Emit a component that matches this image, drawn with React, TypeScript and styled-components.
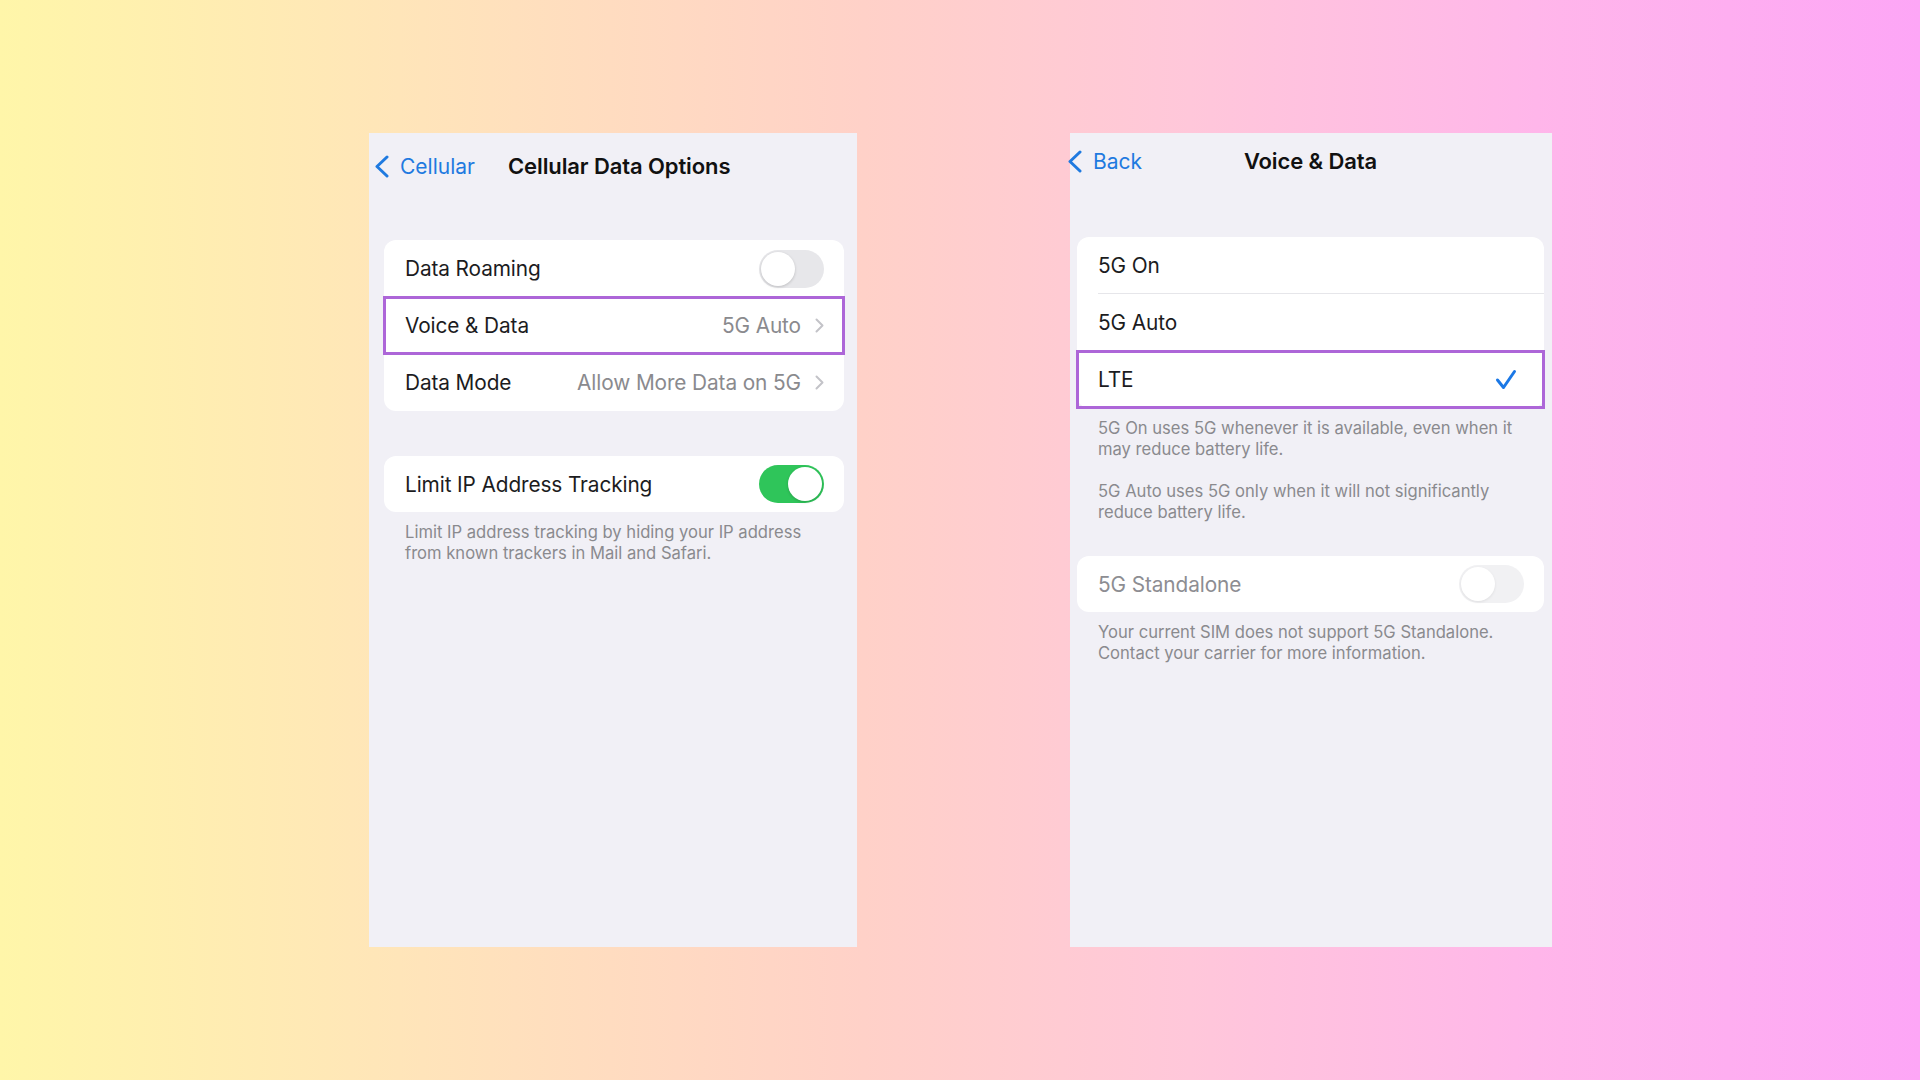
import React from "react";
import styled, { createGlobalStyle } from "styled-components";

const Global = createGlobalStyle`
  html, body { margin: 0; padding: 0; }
  body {
    font-family: Inter, "Noto Sans", "Liberation Sans", sans-serif;
    -webkit-font-smoothing: antialiased;
  }
`;

const Stage = styled.div`
  width: 1920px;
  height: 1080px;
  background: linear-gradient(90deg, #fff6a9 0%, #ffe4ba 22%, #ffd1c8 45%, #ffc7da 62%, #ffb6ea 80%, #fda6f6 100%);
  display: flex;
  align-items: flex-start;
  padding-top: 133px;
  padding-left: 369px;
  box-sizing: border-box;
  gap: 213px;
`;

const Panel = styled.div<{ $w: number; $pl: number; $pr: number }>`
  width: ${(p) => p.$w}px;
  height: 814px;
  background: #f1f0f6;
  display: flex;
  flex-direction: column;
  padding: 0 ${(p) => p.$pr}px 0 ${(p) => p.$pl}px;
  box-sizing: border-box;
`;

const NavBar = styled.div<{ $h: number; $centered?: boolean }>`
  height: ${(p) => p.$h}px;
  display: flex;
  align-items: center;
  position: relative;
  ${(p) => (p.$centered ? "justify-content: center;" : "")}
`;

const BackLink = styled.div<{ $ml: number; $floating?: boolean }>`
  display: flex;
  align-items: center;
  gap: 10px;
  color: #1f7ae0;
  font-size: 21px;
  margin-left: ${(p) => p.$ml}px;
  ${(p) =>
    p.$floating
      ? "position: absolute; left: 0; top: 0; bottom: 0;"
      : ""}
`;

const NavTitle = styled.div<{ $ml?: number }>`
  font-size: 22px;
  font-weight: 600;
  color: #111;
  letter-spacing: -0.1px;
  margin-left: ${(p) => p.$ml ?? 0}px;
`;

const Card = styled.div<{ $mt: number }>`
  margin-top: ${(p) => p.$mt}px;
  background: #fff;
  border-radius: 12px;
  display: flex;
  flex-direction: column;
`;

const Row = styled.div<{ $h?: number; $highlight?: boolean; $sep?: boolean }>`
  height: ${(p) => p.$h ?? 57}px;
  display: flex;
  align-items: center;
  padding: 0 20px 0 21px;
  position: relative;
  ${(p) =>
    p.$highlight
      ? "outline: 3px solid #ad66d8; outline-offset: -2px; z-index: 1;"
      : ""}
  ${(p) =>
    p.$sep
      ? `&::after { content: ""; position: absolute; left: 21px; right: 0; bottom: 0; height: 1px; background: #e6e6ea; }`
      : ""}
`;

const Label = styled.div<{ $muted?: boolean }>`
  font-size: 20.8px;
  color: ${(p) => (p.$muted ? "#8d8d92" : "#1c1c1e")};
  flex: 1;
  letter-spacing: -0.1px;
`;

const Value = styled.div`
  font-size: 20.8px;
  color: #8a8a8e;
  margin-right: 14px;
  letter-spacing: -0.1px;
`;

const Toggle = styled.div<{ $on?: boolean; $faded?: boolean }>`
  width: 65px;
  height: 38px;
  border-radius: 19px;
  background: ${(p) => (p.$on ? "#2fc55a" : p.$faded ? "#f1f1f3" : "#e7e7ea")};
  position: relative;
  flex-shrink: 0;
  &::after {
    content: "";
    position: absolute;
    top: 2px;
    ${(p) => (p.$on ? "right: 2px;" : "left: 2px;")}
    width: 34px;
    height: 34px;
    border-radius: 50%;
    background: #fff;
    box-shadow: 0 1px 3px rgba(0, 0, 0, ${(p) => (p.$faded ? 0.08 : 0.18)});
  }
`;

const Footer = styled.div<{ $mt: number }>`
  margin-top: ${(p) => p.$mt}px;
  padding: 0 12px 0 21px;
  font-size: 16.6px;
  line-height: 21px;
  color: #8a8a8e;
  display: flex;
  flex-direction: column;
  gap: 21px;
  white-space: nowrap;
`;

const Para = styled.p`
  margin: 0;
`;

const Chevron = () => (
  <svg width="9" height="15" viewBox="0 0 9 15" fill="none">
    <path d="M1.5 1.5L7.5 7.5L1.5 13.5" stroke="#c3c3c8" strokeWidth="2" strokeLinecap="round" strokeLinejoin="round" />
  </svg>
);

const BackChevron = () => (
  <svg width="16" height="23" viewBox="0 0 16 23" fill="none">
    <path d="M13 2L3 11.5L13 21" stroke="#1f7ae0" strokeWidth="3" strokeLinecap="round" strokeLinejoin="round" />
  </svg>
);

const Check = () => (
  <svg width="22" height="21" viewBox="0 0 22 21" fill="none">
    <path d="M2.5 11L8.5 18.5L19.5 2.5" stroke="#1b78e6" strokeWidth="3" strokeLinecap="round" strokeLinejoin="round" />
  </svg>
);

const CheckSlot = styled.div`
  margin-right: 7px;
  display: flex;
`;

export default function App() {
  return (
    <>
      <Global />
      <Stage>
        <Panel $w={488} $pl={15} $pr={13}>
          <NavBar $h={66}>
            <BackLink $ml={-10}>
              <BackChevron />
              <span>Cellular</span>
            </BackLink>
            <NavTitle $ml={33}>Cellular Data Options</NavTitle>
          </NavBar>
          <Card $mt={41}>
            <Row>
              <Label>Data Roaming</Label>
              <Toggle />
            </Row>
            <Row $highlight>
              <Label>Voice &amp; Data</Label>
              <Value>5G Auto</Value>
              <Chevron />
            </Row>
            <Row>
              <Label>Data Mode</Label>
              <Value>Allow More Data on 5G</Value>
              <Chevron />
            </Row>
          </Card>
          <Card $mt={45}>
            <Row $h={56}>
              <Label>Limit IP Address Tracking</Label>
              <Toggle $on />
            </Row>
          </Card>
          <Footer $mt={10}>
            <Para>
              Limit IP address tracking by hiding your IP address
              <br />
              from known trackers in Mail and Safari.
            </Para>
          </Footer>
        </Panel>

        <Panel $w={482} $pl={7} $pr={8}>
          <NavBar $h={56} $centered>
            <BackLink $ml={-10} $floating>
              <BackChevron />
              <span>Back</span>
            </BackLink>
            <NavTitle>Voice &amp; Data</NavTitle>
          </NavBar>
          <Card $mt={48}>
            <Row $sep>
              <Label>5G On</Label>
            </Row>
            <Row>
              <Label>5G Auto</Label>
            </Row>
            <Row $highlight>
              <Label>LTE</Label>
              <CheckSlot>
                <Check />
              </CheckSlot>
            </Row>
          </Card>
          <Footer $mt={10}>
            <Para>
              5G On uses 5G whenever it is available, even when it
              <br />
              may reduce battery life.
            </Para>
            <Para>
              5G Auto uses 5G only when it will not significantly
              <br />
              reduce battery life.
            </Para>
          </Footer>
          <Card $mt={33}>
            <Row $h={56}>
              <Label $muted>5G Standalone</Label>
              <Toggle $faded />
            </Row>
          </Card>
          <Footer $mt={10}>
            <Para>
              Your current SIM does not support 5G Standalone.
              <br />
              Contact your carrier for more information.
            </Para>
          </Footer>
        </Panel>
      </Stage>
    </>
  );
}
